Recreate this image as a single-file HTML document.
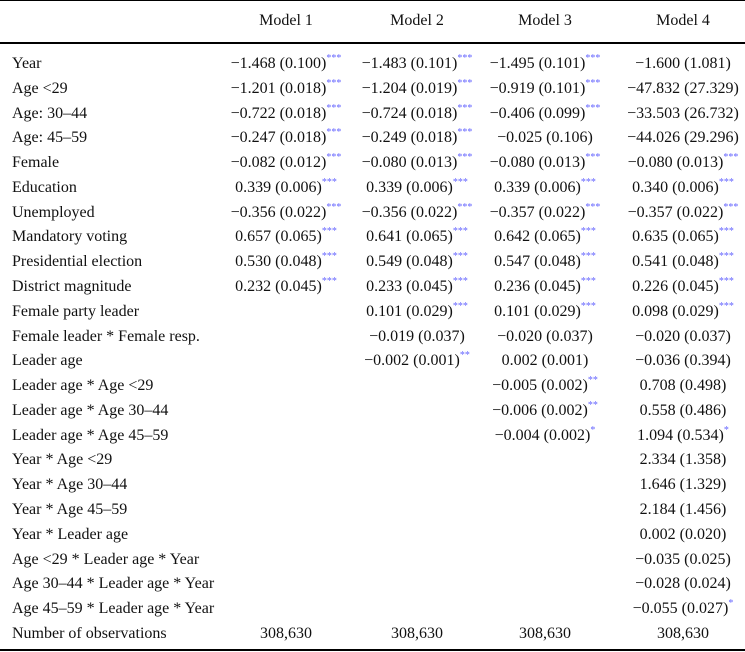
<!DOCTYPE html><html><head><style>
body{margin:0;width:745px;height:652px;background:#fff;font-family:"Liberation Serif",serif;font-size:16px;color:#111;position:relative;overflow:hidden}
.r{position:absolute;left:0;width:745px;height:20px;line-height:20px}
.l{position:absolute;left:12px;white-space:nowrap}
.c{position:absolute;width:200px;text-align:center;white-space:nowrap}
sup{color:#6666ff;font-size:10px;vertical-align:7px;line-height:0}
.h{position:absolute;left:0;width:745px;background:#000}
</style></head><body>
<div class="h" style="top:0;height:1px"></div>
<div class="h" style="top:42px;height:1.5px"></div>
<div class="h" style="top:649px;height:1.5px"></div>
<div id="t"></div>
<script>
var cx=[286,417,545,683];
var H=[["","Model 1","Model 2","Model 3","Model 4"]];
var s3="<sup>***</sup>",s2="<sup>**</sup>",s1="<sup>*</sup>";
var R=[
["Year","−1.468 (0.100)"+s3,"−1.483 (0.101)"+s3,"−1.495 (0.101)"+s3,"−1.600 (1.081)"],
["Age &lt;29","−1.201 (0.018)"+s3,"−1.204 (0.019)"+s3,"−0.919 (0.101)"+s3,"−47.832 (27.329)"],
["Age: 30–44","−0.722 (0.018)"+s3,"−0.724 (0.018)"+s3,"−0.406 (0.099)"+s3,"−33.503 (26.732)"],
["Age: 45–59","−0.247 (0.018)"+s3,"−0.249 (0.018)"+s3,"−0.025 (0.106)","−44.026 (29.296)"],
["Female","−0.082 (0.012)"+s3,"−0.080 (0.013)"+s3,"−0.080 (0.013)"+s3,"−0.080 (0.013)"+s3],
["Education","0.339 (0.006)"+s3,"0.339 (0.006)"+s3,"0.339 (0.006)"+s3,"0.340 (0.006)"+s3],
["Unemployed","−0.356 (0.022)"+s3,"−0.356 (0.022)"+s3,"−0.357 (0.022)"+s3,"−0.357 (0.022)"+s3],
["Mandatory voting","0.657 (0.065)"+s3,"0.641 (0.065)"+s3,"0.642 (0.065)"+s3,"0.635 (0.065)"+s3],
["Presidential election","0.530 (0.048)"+s3,"0.549 (0.048)"+s3,"0.547 (0.048)"+s3,"0.541 (0.048)"+s3],
["District magnitude","0.232 (0.045)"+s3,"0.233 (0.045)"+s3,"0.236 (0.045)"+s3,"0.226 (0.045)"+s3],
["Female party leader","","0.101 (0.029)"+s3,"0.101 (0.029)"+s3,"0.098 (0.029)"+s3],
["Female leader * Female resp.","","−0.019 (0.037)","−0.020 (0.037)","−0.020 (0.037)"],
["Leader age","","−0.002 (0.001)"+s2,"0.002 (0.001)","−0.036 (0.394)"],
["Leader age * Age &lt;29","","","−0.005 (0.002)"+s2,"0.708 (0.498)"],
["Leader age * Age 30–44","","","−0.006 (0.002)"+s2,"0.558 (0.486)"],
["Leader age * Age 45–59","","","−0.004 (0.002)"+s1,"1.094 (0.534)"+s1],
["Year * Age &lt;29","","","","2.334 (1.358)"],
["Year * Age 30–44","","","","1.646 (1.329)"],
["Year * Age 45–59","","","","2.184 (1.456)"],
["Year * Leader age","","","","0.002 (0.020)"],
["Age &lt;29 * Leader age * Year","","","","−0.035 (0.025)"],
["Age 30–44 * Leader age * Year","","","","−0.028 (0.024)"],
["Age 45–59 * Leader age * Year","","","","−0.055 (0.027)"+s1],
["Number of observations","308,630","308,630","308,630","308,630"]];
var o="";
function row(r,y){o+='<div class="r" style="top:'+(y-10)+'px"><span class="l">'+r[0]+'</span>';for(var i=0;i<4;i++)o+='<span class="c" style="left:'+(cx[i]-100)+'px">'+r[i+1]+'</span>';o+='</div>';}
row(H[0],21);
R.forEach(function(r,i){row(r,64+i*24.78);});
document.getElementById("t").innerHTML=o;
</script>
</body></html>
